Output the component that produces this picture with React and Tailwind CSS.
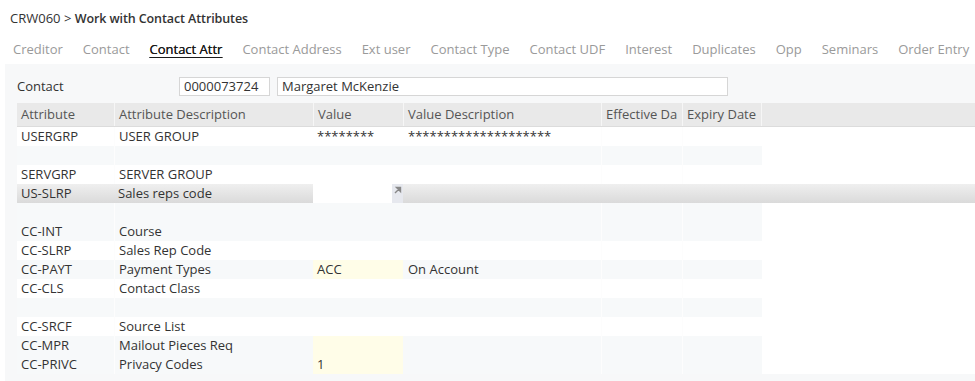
import React from 'react';

const tabs = ['Creditor', 'Contact', 'Contact Attr', 'Contact Address', 'Ext user', 'Contact Type', 'Contact UDF', 'Interest', 'Duplicates', 'Opp', 'Seminars', 'Order Entry'];

const cols = [
    { label: 'Attribute', w: 'w-[97px]' },
    { label: 'Attribute Description', w: 'w-[199px]' },
    { label: 'Value', w: 'w-[90px]' },
    { label: 'Value Description', w: 'w-[198px]' },
    { label: 'Effective Da', w: 'w-[81px]' },
    { label: 'Expiry Date', w: 'w-[80px]' },
];

const rows = [
    { code: 'USERGRP', desc: 'USER GROUP', value: '********', vdesc: '********************', tint: false },
    { tint: true },
    { code: 'SERVGRP', desc: 'SERVER GROUP', tint: false },
    { code: 'US-SLRP', desc: 'Sales reps code', selected: true },
    { tint: true },
    { code: 'CC-INT', desc: 'Course', tint: true },
    { code: 'CC-SLRP', desc: 'Sales Rep Code', tint: false },
    { code: 'CC-PAYT', desc: 'Payment Types', value: 'ACC', vdesc: 'On Account', yellow: true, tint: true },
    { code: 'CC-CLS', desc: 'Contact Class', tint: false },
    { tint: true },
    { code: 'CC-SRCF', desc: 'Source List', tint: false },
    { code: 'CC-MPR', desc: 'Mailout Pieces Req', yellow: true, tint: true },
    { code: 'CC-PRIVC', desc: 'Privacy Codes', value: '1', yellow: true, tint: true },
];

const Row = ({ row }) => {
    if (row.selected) {
        return (
            <div className="flex h-[19px] bg-gradient-to-b from-[#efefef] to-[#dadada]">
                <div className="w-[97px] px-[4px] leading-[19px]">{row.code}</div>
                <div className="w-[199px] px-[4px] leading-[19px]">{row.desc}</div>
                <div className="w-[90px] flex bg-white">
                    <div className="flex-1" />
                    <div className="w-[11px] bg-[#e6e8ee] flex items-start justify-center pt-[2px]">
                        <svg width="8" height="8" viewBox="0 0 8 8">
                            <path d="M1 7 L6 2 M2.5 1.5 H6.5 V5.5 Z" stroke="#888" strokeWidth="1.4" fill="#888" />
                        </svg>
                    </div>
                </div>
                <div className="flex-1" />
            </div>
        );
    }
    const bg = row.tint ? 'bg-[#f7f9fa]' : 'bg-white';
    return (
        <div className="flex h-[19px]">
            <div className={`flex ${bg}`}>
                <div className="w-[97px] px-[4px] leading-[19px]">{row.code}</div>
                <div className="w-[199px] px-[4px] leading-[19px] border-l border-[#fdfdfd]">{row.desc}</div>
                <div className={`w-[90px] px-[4px] leading-[19px] ${row.yellow ? 'bg-[#fffde8]' : ''}`}>{row.value}</div>
                <div className="w-[198px] px-[5px] leading-[19px]">{row.vdesc}</div>
                <div className="w-[81px] border-l border-[#fdfdfd]" />
                <div className="w-[80px] border-l border-[#fdfdfd]" />
            </div>
            <div className="flex-1 bg-white" />
        </div>
    );
};

export default function App() {
    return (
        <div className="w-[975px] h-[381px] bg-white overflow-hidden text-[13px] text-[#333]" style={{ fontFamily: '"Open Sans", "Liberation Sans", sans-serif' }}>
            <div className="h-[38px] pl-[10px] pt-[8px] leading-[20px]">
                CRW060 &gt; <span className="font-semibold text-[12.5px] tracking-[-0.1px]">Work with Contact Attributes</span>
            </div>
            <div className="h-[26px] pl-[13px] flex gap-[20px] whitespace-nowrap leading-[22px]">
                {tabs.map(t => (
                    <span key={t} className={t === 'Contact Attr' ? 'text-[#1a1a1a] underline underline-offset-[3px] [text-shadow:0_0_0.4px_#1a1a1a]' : 'text-[#9a9a9a]'}>{t}</span>
                ))}
            </div>
            <div className="ml-[5px] bg-[#f7f8f9] h-[317px] pl-[12px]">
                <div className="h-[39px] flex items-center pt-[6px]">
                    <span className="w-[162px]">Contact</span>
                    <div className="w-[91px] h-[19px] border border-[#d6d6d6] bg-white px-[4px] leading-[17px]">0000073724</div>
                    <div className="w-[451px] h-[19px] ml-[7px] border border-[#d6d6d6] bg-white px-[4px] leading-[17px]">Margaret McKenzie</div>
                </div>
                <div className="flex h-[24px] bg-[#e9e9e9] border-b border-[#dcdcdc] text-[#555]">
                    {cols.map((c, i) => (
                        <div key={c.label} className={`${c.w} px-[4px] leading-[23px] whitespace-nowrap overflow-hidden ${i > 0 ? 'border-l border-[#f6f6f6]' : ''} ${i === 5 ? 'border-r' : ''}`}>{c.label}</div>
                    ))}
                    <div className="flex-1" />
                </div>
                {rows.map((r, i) => <Row key={i} row={r} />)}
            </div>
        </div>
    );
}
